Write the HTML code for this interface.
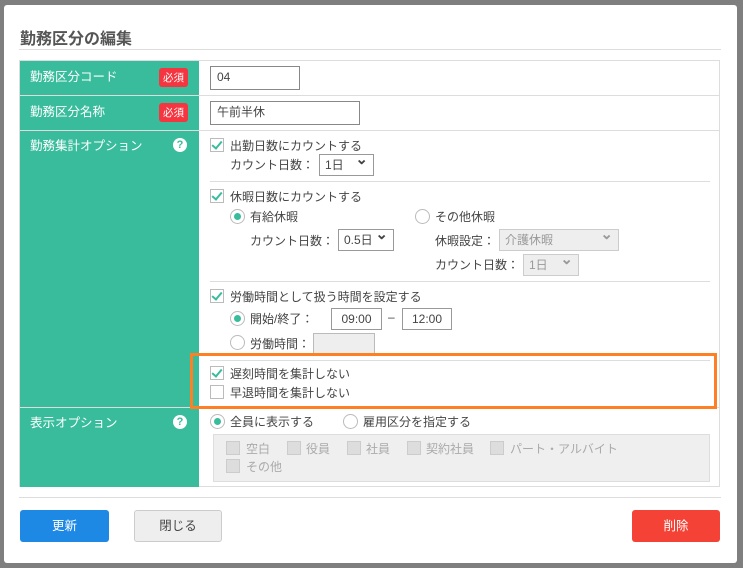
<!DOCTYPE html>
<html><head><meta charset="utf-8"><style>
body{margin:0;width:743px;height:568px;background:#7f7f7f;font-family:"Liberation Sans","Noto Sans CJK JP",sans-serif;font-size:12px;color:#444;position:relative;overflow:hidden}
.a{position:absolute}
.dlg{left:4px;top:5px;width:733px;height:558px;background:#fff;border-radius:3px}
.lab{color:#fff;font-size:12.5px}
.req{background:#f5353f;color:#fff;font-size:10.5px;padding:2px 4px;border-radius:3px}
.cb{width:12px;height:12px;border:1px solid #bbb;background:#fff}
.cb.on::after{content:"";position:absolute;left:3px;top:0px;width:4px;height:8px;border:solid #38bc9c;border-width:0 2px 2px 0;transform:rotate(40deg)}
.rd{width:13px;height:13px;border:1px solid #bbb;border-radius:50%;background:#fff}
.rd.on::after{content:"";position:absolute;left:3px;top:3px;width:7px;height:7px;border-radius:50%;background:#38bc9c}
.in{border:1px solid #888;background:#fff;box-sizing:border-box;padding:0 6px;line-height:21px}
.sel{border:1px solid #999;background:#fff;box-sizing:border-box;padding-left:5px;line-height:20px}
.sel::after{content:"⌄";position:absolute;right:5px;top:-5px;font-size:15px;font-weight:bold}
.dis{background:#eee;color:#999;border-color:#ccc}
.hl{height:1px;background:#ddd}
.q{width:14px;height:14px;border-radius:50%;background:#fff;color:#38bc9c;font-weight:bold;font-size:11px;text-align:center;line-height:14px}
.gc{width:12px;height:12px;background:#ddd;border:1px solid #ccc}
.gt{color:#aaa}
.btn{height:32px;line-height:32px;text-align:center;border-radius:3px;font-size:12.5px}
</style></head><body>
<div class="a dlg"></div>
<div class="a" style="left:20px;top:25px;font-size:16px;font-weight:bold;color:#555">勤務区分の編集</div>
<div class="a hl" style="left:19px;top:49px;width:702px"></div>
<div class="a" style="left:19px;top:60px;width:701px;height:427px;border:1px solid #ddd;box-sizing:border-box"></div>
<div class="a" style="left:20px;top:61px;width:179px;height:426px;background:#38bc9c"></div>
<div class="a" style="left:20px;top:95px;width:700px;height:1px;background:#ddd"></div>
<div class="a" style="left:20px;top:130px;width:700px;height:1px;background:#ddd"></div>
<div class="a" style="left:20px;top:407px;width:700px;height:1px;background:#ddd"></div>
<div class="a lab" style="left:30px;top:66px">勤務区分コード</div><div class="a req" style="left:159px;top:68px">必須</div>
<div class="a lab" style="left:30px;top:101px">勤務区分名称</div><div class="a req" style="left:159px;top:103px">必須</div>
<div class="a lab" style="left:30px;top:135px">勤務集計オプション</div><div class="a q" style="left:173px;top:138px">?</div>
<div class="a lab" style="left:30px;top:412px">表示オプション</div><div class="a q" style="left:173px;top:415px">?</div>
<div class="a in" style="left:210px;top:66px;width:90px;height:24px">04</div>
<div class="a in" style="left:210px;top:101px;width:150px;height:24px">午前半休</div>
<div class="a cb on" style="left:210px;top:138px"></div><div class="a" style="left:230px;top:137px">出勤日数にカウントする</div>
<div class="a" style="left:230px;top:156px">カウント日数：</div><div class="a sel" style="left:319px;top:154px;width:55px;height:22px">1日</div>
<div class="a hl" style="left:210px;top:181px;width:500px"></div>
<div class="a cb on" style="left:210px;top:189px"></div><div class="a" style="left:230px;top:188px">休暇日数にカウントする</div>
<div class="a rd on" style="left:230px;top:209px"></div><div class="a" style="left:250px;top:208px">有給休暇</div>
<div class="a rd" style="left:415px;top:209px"></div><div class="a" style="left:435px;top:208px">その他休暇</div>
<div class="a" style="left:250px;top:232px">カウント日数：</div><div class="a sel" style="left:338px;top:229px;width:56px;height:22px">0.5日</div>
<div class="a" style="left:435px;top:232px">休暇設定：</div><div class="a sel dis" style="left:499px;top:229px;width:120px;height:22px">介護休暇</div>
<div class="a" style="left:435px;top:256px">カウント日数：</div><div class="a sel dis" style="left:523px;top:254px;width:56px;height:22px">1日</div>
<div class="a hl" style="left:210px;top:281px;width:500px"></div>
<div class="a cb on" style="left:210px;top:289px"></div><div class="a" style="left:230px;top:288px">労働時間として扱う時間を設定する</div>
<div class="a rd on" style="left:230px;top:311px"></div><div class="a" style="left:250px;top:310px">開始/終了：</div>
<div class="a in" style="left:331px;top:308px;width:51px;height:22px;border-color:#999;text-align:center;padding:0">09:00</div>
<div class="a" style="left:388px;top:310px">–</div>
<div class="a in" style="left:402px;top:308px;width:50px;height:22px;border-color:#999;text-align:center;padding:0">12:00</div>
<div class="a rd" style="left:230px;top:335px"></div><div class="a" style="left:250px;top:335px">労働時間：</div>
<div class="a" style="left:313px;top:333px;width:62px;height:22px;background:#eee;border:1px solid #bbb;box-sizing:border-box"></div>
<div class="a hl" style="left:210px;top:360px;width:500px"></div>
<div class="a cb on" style="left:210px;top:366px"></div><div class="a" style="left:230px;top:365px">遅刻時間を集計しない</div>
<div class="a cb" style="left:210px;top:385px"></div><div class="a" style="left:230px;top:384px">早退時間を集計しない</div>
<div class="a" style="left:190px;top:353px;width:527px;height:56px;border:3px solid #ff7f24;box-sizing:border-box"></div>
<div class="a rd on" style="left:210px;top:414px"></div><div class="a" style="left:230px;top:413px">全員に表示する</div>
<div class="a rd" style="left:343px;top:414px"></div><div class="a" style="left:363px;top:413px">雇用区分を指定する</div>
<div class="a" style="left:213px;top:434px;width:497px;height:48px;background:#efefef;border:1px solid #ddd;box-sizing:border-box"></div>
<div class="a gc" style="left:226px;top:441px"></div><div class="a gt" style="left:246px;top:440px">空白</div>
<div class="a gc" style="left:287px;top:441px"></div><div class="a gt" style="left:306px;top:440px">役員</div>
<div class="a gc" style="left:347px;top:441px"></div><div class="a gt" style="left:366px;top:440px">社員</div>
<div class="a gc" style="left:407px;top:441px"></div><div class="a gt" style="left:426px;top:440px">契約社員</div>
<div class="a gc" style="left:490px;top:441px"></div><div class="a gt" style="left:510px;top:440px">パート・アルバイト</div>
<div class="a gc" style="left:226px;top:459px"></div><div class="a gt" style="left:246px;top:458px">その他</div>
<div class="a hl" style="left:19px;top:497px;width:702px"></div>
<div class="a btn" style="left:20px;top:510px;width:89px;background:#1e88e5;color:#fff">更新</div>
<div class="a btn" style="left:134px;top:510px;width:88px;background:#eee;border:1px solid #ccc;box-sizing:border-box;line-height:30px;color:#444">閉じる</div>
<div class="a btn" style="left:632px;top:510px;width:88px;background:#f44336;color:#fff">削除</div>
</body></html>
